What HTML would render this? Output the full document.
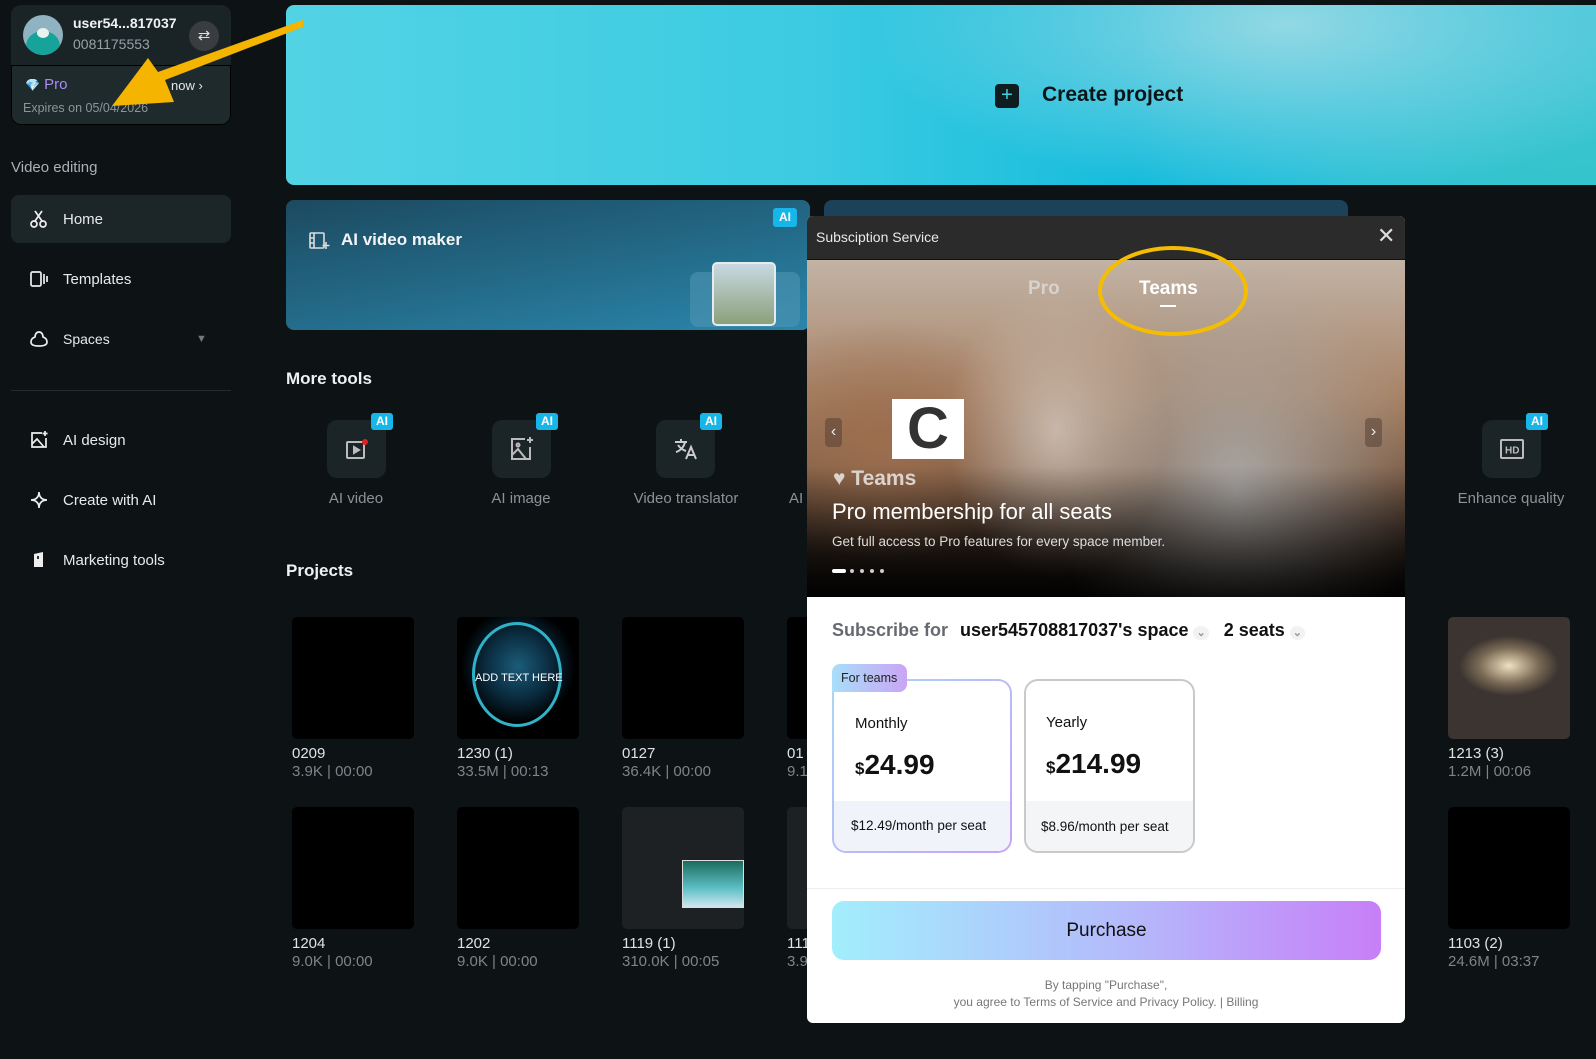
<!DOCTYPE html>
<html><head><meta charset="utf-8"><style>
*{box-sizing:border-box;margin:0;padding:0}
body{width:1596px;height:1059px;overflow:hidden;background:#0d1315;font-family:"Liberation Sans",sans-serif;color:#e8eced;position:relative}
.abs{position:absolute}
.nav{position:absolute;left:11px;width:220px;height:48px;display:flex;align-items:center;padding-left:18px;font-size:15px;color:#e6eaeb}
.nav svg{margin-right:14px}
.tile{position:absolute;width:59px;height:58px;border-radius:10px;background:#1b2427;display:flex;align-items:center;justify-content:center}
.ai{position:absolute;background:#17b6e8;color:#fff;font-size:12px;font-weight:bold;border-radius:3px;padding:2px 5px;line-height:13px}
.tl{position:absolute;font-size:15px;color:#8a9396;text-align:center;width:160px}
.th{position:absolute;width:122px;height:122px;background:#000;border-radius:5px;overflow:hidden}
.pn{position:absolute;font-size:15px;color:#dfe3e4}
.pm{position:absolute;font-size:15px;color:#7d8588}
</style></head><body>

<!-- user card -->
<div class="abs" style="left:11px;top:5px;width:220px;height:120px;border-radius:10px;background:#1a2427;overflow:hidden">
  <div class="abs" style="left:12px;top:10px;width:40px;height:40px;border-radius:50%;background:#8fb3c0;overflow:hidden">
    <div class="abs" style="left:3px;top:16px;width:34px;height:30px;border-radius:50%;background:#16a39a"></div>
    <div class="abs" style="left:14px;top:13px;width:12px;height:10px;border-radius:50%;background:#e8f3f0"></div>
  </div>
  <div class="abs" style="left:62px;top:10px;font-size:14px;font-weight:bold;color:#f0f2f3">user54...817037</div>
  <div class="abs" style="left:62px;top:31px;font-size:14px;color:#98a1a4">0081175553</div>
  <div class="abs" style="left:178px;top:16px;width:30px;height:30px;border-radius:50%;background:#3a3d3f;color:#ddd;font-size:15px;text-align:center;line-height:30px">⇄</div>
  <div class="abs" style="left:0;top:60px;width:220px;height:60px;border:1px solid #000;border-radius:0 0 10px 10px;background:#1f2a2d"></div>
  <div class="abs" style="left:14px;top:71px;font-size:15px;color:#a98cf5"><span style="font-size:12px">💎</span> Pro</div>
  <div class="abs" style="left:160px;top:73px;font-size:13px;color:#e6e6e6">now ›</div>
  <div class="abs" style="left:12px;top:96px;font-size:12.5px;color:#8c9598">Expires on 05/04/2026</div>
</div>

<div class="abs" style="left:11px;top:159px;font-size:15px;color:#a9b1b4">Video editing</div>
<div class="nav" style="top:195px;background:#1c2528;border-radius:8px">
<svg width="20" height="20" viewBox="0 0 20 20" fill="none" stroke="#eee" stroke-width="1.7"><circle cx="5" cy="15" r="3"/><circle cx="14" cy="15" r="3"/><path d="M6 12 13 2M13 12 6 2"/></svg>Home</div>
<div class="nav" style="top:255px"><svg width="20" height="20" viewBox="0 0 20 20" fill="none" stroke="#eee" stroke-width="1.7"><rect x="2" y="3" width="10" height="14" rx="1.5"/><path d="M15 5v10M18 7v6"/></svg>Templates</div>
<div class="nav" style="top:315px;font-size:14px"><svg width="20" height="20" viewBox="0 0 20 20" fill="none" stroke="#eee" stroke-width="1.7"><path d="M10 3c3 0 4 3 4 5 3 1 4 3 4 5 0 3-3 4-8 4s-8-1-8-4c0-2 1-4 4-5 0-2 1-5 4-5z"/></svg>Spaces<span style="position:absolute;left:185px;font-size:11px;color:#777">▼</span></div>
<div class="abs" style="left:11px;top:390px;width:220px;height:1px;background:#232c2f"></div>
<div class="nav" style="top:416px"><svg width="20" height="20" viewBox="0 0 20 20" fill="none" stroke="#eee" stroke-width="1.7"><path d="M13 3H3v14h14V8"/><path d="M3 14l5-5 7 8"/><path d="M16 1v5M13.5 3.5h5"/></svg>AI design</div>
<div class="nav" style="top:476px"><svg width="20" height="20" viewBox="0 0 20 20" fill="none" stroke="#eee" stroke-width="1.7"><path d="M10 2c0 5 3 8 8 8-5 0-8 3-8 8 0-5-3-8-8-8 5 0 8-3 8-8z"/></svg>Create with AI</div>
<div class="nav" style="top:536px"><svg width="20" height="20" viewBox="0 0 20 20"><path d="M5 4l9-2v15H5z" fill="#eee"/><rect x="8" y="6" width="2" height="3" fill="#333"/></svg>Marketing tools</div>

<!-- Create project banner -->
<div class="abs" style="left:286px;top:5px;width:1310px;height:180px;border-radius:8px 0 0 8px;background:radial-gradient(ellipse 420px 170px at 1000px 20px,#92d8e4,transparent),radial-gradient(ellipse 300px 160px at 1300px 200px,#34c4c9,transparent),linear-gradient(90deg,#52d3e4,#3ccbe2 40%,#16bcdc 65%,#3ec5d8)"></div>
<div class="abs" style="left:995px;top:84px;width:24px;height:24px;border-radius:4px;background:#0f1c20;color:#45d0e3;font-size:20px;text-align:center;line-height:23px">+</div>
<div class="abs" style="left:1042px;top:83px;font-size:21px;font-weight:bold;color:#0b1417">Create project</div>

<!-- AI video maker -->
<div class="abs" style="left:286px;top:200px;width:524px;height:130px;border-radius:8px;background:linear-gradient(170deg,#1c4a60,#2a86ab)"></div>
<svg class="abs" style="left:308px;top:230px" width="22" height="22" viewBox="0 0 22 22" fill="none" stroke="#ddd" stroke-width="1.6"><rect x="2" y="3" width="14" height="15" rx="1"/><path d="M6 3v15M2 8h4M2 13h4"/><path d="M18 12v7M14.5 15.5h7"/></svg>
<div class="abs" style="left:341px;top:230px;font-size:17px;font-weight:bold;color:#f2f5f6">AI video maker</div>
<div class="ai" style="left:773px;top:208px;padding:3px 6px">AI</div>
<div class="abs" style="left:690px;top:272px;width:110px;height:55px;border-radius:8px;background:#4f94b3;opacity:.6"></div>
<div class="abs" style="left:712px;top:262px;width:64px;height:64px;border-radius:5px;background:linear-gradient(#c9d9e3,#8aa07a);border:2px solid #e5ecf0"></div>
<div class="abs" style="left:824px;top:200px;width:524px;height:20px;border-radius:8px 8px 0 0;background:#1b4258"></div>

<!-- More tools -->
<div class="abs" style="left:286px;top:369px;font-size:17px;font-weight:bold;color:#eef1f2">More tools</div>
<div class="tile" style="left:327px;top:420px"><svg width="26" height="26" viewBox="0 0 26 26" fill="none" stroke="#bbb" stroke-width="2"><rect x="3" y="6" width="17" height="16" rx="1"/><path d="M10 11v6l5-3z" fill="#bbb"/><circle cx="21" cy="6" r="3" fill="#d22" stroke="none"/></svg></div>
<div class="ai" style="left:371px;top:413px">AI</div>
<div class="tl" style="left:276px;top:490px">AI video</div>
<div class="tile" style="left:492px;top:420px"><svg width="28" height="28" viewBox="0 0 28 28" fill="none" stroke="#bbb" stroke-width="2"><path d="M17 4H4v20h18V12"/><path d="M4 20l6-6 8 10"/><circle cx="10" cy="10" r="1.5"/><path d="M22 2v6M19 5h6"/></svg></div>
<div class="ai" style="left:536px;top:413px">AI</div>
<div class="tl" style="left:441px;top:490px">AI image</div>
<div class="tile" style="left:656px;top:420px"><svg width="28" height="28" viewBox="0 0 28 28" fill="none" stroke="#ccc" stroke-width="2"><path d="M3 7h12M9 4v3M13 7c-1 5-5 9-9 10M6 10c2 3 5 5 8 6"/><path d="M14 24l5-12 5 12M16 20h6"/></svg></div>
<div class="ai" style="left:700px;top:413px">AI</div>
<div class="tl" style="left:606px;top:490px">Video translator</div>
<div class="abs" style="left:789px;top:490px;font-size:15px;color:#8a9396">AI</div>
<div class="tile" style="left:1482px;top:420px"><svg width="26" height="22" viewBox="0 0 26 22" fill="none" stroke="#bbb" stroke-width="2"><rect x="2" y="2" width="22" height="18" rx="1"/><text x="6" y="15.5" font-size="10" font-family="Liberation Sans" font-weight="bold" fill="#bbb" stroke="none">HD</text></svg></div>
<div class="ai" style="left:1526px;top:413px">AI</div>
<div class="tl" style="left:1431px;top:490px">Enhance quality</div>

<!-- Projects -->
<div class="abs" style="left:286px;top:561px;font-size:17px;font-weight:bold;color:#eef1f2">Projects</div>
<div class="th" style="left:292px;top:617px"></div>
<div class="th" style="left:457px;top:617px;background:radial-gradient(circle at 50% 40%,#1b5c7a 0,#0a2a3d 35%,#000 60%)"><div class="abs" style="left:15px;top:5px;width:90px;height:105px;border:3px solid #2fb3c9;border-radius:50%"></div><div class="abs" style="left:18px;top:55px;font-size:11px;color:#fff">ADD TEXT HERE</div></div>
<div class="th" style="left:622px;top:617px"></div>
<div class="th" style="left:787px;top:617px"></div>
<div class="th" style="left:1448px;top:617px;background:radial-gradient(ellipse 50px 30px at 50% 40%,#eee0c0,#7a6a55 60%,#3b3430)"></div>
<div class="pn" style="left:292px;top:745px">0209</div><div class="pm" style="left:292px;top:763px">3.9K | 00:00</div>
<div class="pn" style="left:457px;top:745px">1230 (1)</div><div class="pm" style="left:457px;top:763px">33.5M | 00:13</div>
<div class="pn" style="left:622px;top:745px">0127</div><div class="pm" style="left:622px;top:763px">36.4K | 00:00</div>
<div class="pn" style="left:787px;top:745px">01</div><div class="pm" style="left:787px;top:763px">9.1</div>
<div class="pn" style="left:1448px;top:745px">1213 (3)</div><div class="pm" style="left:1448px;top:763px">1.2M | 00:06</div>
<div class="th" style="left:292px;top:807px"></div>
<div class="th" style="left:457px;top:807px"></div>
<div class="th" style="left:622px;top:807px;background:#1e2124"><div class="abs" style="left:60px;top:53px;width:62px;height:48px;border:1px solid #ddd;background:linear-gradient(#1a6c5c,#5fc0c8 60%,#cfe6ee)"></div></div>
<div class="th" style="left:787px;top:807px;background:#1e2124"></div>
<div class="th" style="left:1448px;top:807px"></div>
<div class="pn" style="left:292px;top:935px">1204</div><div class="pm" style="left:292px;top:953px">9.0K | 00:00</div>
<div class="pn" style="left:457px;top:935px">1202</div><div class="pm" style="left:457px;top:953px">9.0K | 00:00</div>
<div class="pn" style="left:622px;top:935px">1119 (1)</div><div class="pm" style="left:622px;top:953px">310.0K | 00:05</div>
<div class="pn" style="left:787px;top:935px">111</div><div class="pm" style="left:787px;top:953px">3.9</div>
<div class="pn" style="left:1448px;top:935px">1103 (2)</div><div class="pm" style="left:1448px;top:953px">24.6M | 03:37</div>

<!-- Modal -->
<div class="abs" style="left:807px;top:216px;width:598px;height:807px;border-radius:6px;overflow:hidden;background:#fff">
  <div class="abs" style="left:0;top:0;width:598px;height:44px;background:#2b2b2b;border-bottom:1px solid #111"></div>
  <div class="abs" style="left:9px;top:13px;font-size:14px;color:#e8e8e8">Subsciption Service</div>
  <div class="abs" style="left:570px;top:7px;font-size:22px;color:#ddd">✕</div>
  <div class="abs" style="left:0;top:44px;width:598px;height:337px;background:radial-gradient(ellipse 110px 150px at 250px 170px,#c7b7aa,transparent),radial-gradient(ellipse 180px 230px at 430px 230px,#aaa7a4,transparent),radial-gradient(ellipse 160px 120px at 80px 180px,#9c6e4e,transparent),linear-gradient(180deg,#c2b3a5 0%,#a88468 40%,#7a5a44 65%,#0e0c0b 100%)"></div>
  <div class="abs" style="left:0;top:250px;width:598px;height:131px;background:linear-gradient(transparent,rgba(0,0,0,.85))"></div>
  <div class="abs" style="left:221px;top:62px;font-size:19px;font-weight:bold;color:#d8d2cc">Pro</div>
  <div class="abs" style="left:332px;top:62px;font-size:19px;font-weight:bold;color:#fff">Teams</div>
  <div class="abs" style="left:353px;top:89px;width:16px;height:2px;background:#fff"></div>
  <div class="abs" style="left:85px;top:183px;width:72px;height:60px;background:#fff;color:#333;font-size:58px;font-weight:bold;text-align:center;line-height:60px">C</div>
  <div class="abs" style="left:18px;top:202px;width:17px;height:29px;border-radius:4px;background:rgba(80,60,50,.5);color:#eee;text-align:center;line-height:28px">‹</div>
  <div class="abs" style="left:558px;top:202px;width:17px;height:29px;border-radius:4px;background:rgba(80,60,50,.5);color:#eee;text-align:center;line-height:28px">›</div>
  <div class="abs" style="left:26px;top:251px;font-size:21px;font-weight:bold;color:#dcd3cc">♥ Teams</div>
  <div class="abs" style="left:25px;top:283px;font-size:22px;color:#fff">Pro membership for all seats</div>
  <div class="abs" style="left:25px;top:318px;font-size:13.5px;color:#ddd">Get full access to Pro features for every space member.</div>
  <div class="abs" style="left:25px;top:353px;width:14px;height:4px;border-radius:2px;background:#fff"></div>
  <div class="abs" style="left:43px;top:353px;font-size:0"><span style="display:inline-block;width:4px;height:4px;border-radius:50%;background:#ccc;margin-right:6px"></span><span style="display:inline-block;width:4px;height:4px;border-radius:50%;background:#ccc;margin-right:6px"></span><span style="display:inline-block;width:4px;height:4px;border-radius:50%;background:#ccc;margin-right:6px"></span><span style="display:inline-block;width:4px;height:4px;border-radius:50%;background:#ccc"></span></div>

  <div class="abs" style="left:25px;top:404px;font-size:18px;font-weight:bold;color:#666a70">Subscribe for</div>
  <div class="abs" style="left:153px;top:404px;font-size:18px;font-weight:bold;color:#111">user545708817037's space <span style="font-size:11px;color:#999;background:#f2f2f2;border-radius:50%;padding:1px 3px">⌄</span>&nbsp;&nbsp;&nbsp;2 seats <span style="font-size:11px;color:#999;background:#f2f2f2;border-radius:50%;padding:1px 3px">⌄</span></div>

  <div class="abs" style="left:25px;top:463px;width:180px;height:174px;border-radius:14px;padding:2px;background:linear-gradient(135deg,#a6d8f7,#c8a2f5)"><div style="width:100%;height:100%;border-radius:12px;background:#fff;overflow:hidden;position:relative"><div class="abs" style="left:0;top:120px;width:100%;height:60px;background:#f1f3fb"></div></div></div>
  <div class="abs" style="left:25px;top:448px;width:75px;height:28px;border-radius:8px 8px 8px 0;background:linear-gradient(90deg,#a8def8,#caa5f5);font-size:12.5px;color:#222;padding:7px 0 0 9px">For teams</div>
  <div class="abs" style="left:48px;top:499px;font-size:15px;color:#111">Monthly</div>
  <div class="abs" style="left:48px;top:533px;font-size:28px;font-weight:bold;color:#111"><span style="font-size:17px">$</span>24.99</div>
  <div class="abs" style="left:44px;top:602px;font-size:13.5px;color:#111">$12.49/month per seat</div>

  <div class="abs" style="left:217px;top:463px;width:171px;height:174px;border-radius:14px;border:2px solid #c9c9c9;background:#fff;overflow:hidden"><div class="abs" style="left:0;top:120px;width:100%;height:60px;background:#f4f5f6"></div></div>
  <div class="abs" style="left:239px;top:498px;font-size:15px;color:#111">Yearly</div>
  <div class="abs" style="left:239px;top:532px;font-size:28px;font-weight:bold;color:#111"><span style="font-size:17px">$</span>214.99</div>
  <div class="abs" style="left:234px;top:603px;font-size:13.5px;color:#111">$8.96/month per seat</div>

  <div class="abs" style="left:0;top:672px;width:598px;height:1px;background:#eee"></div>
  <div class="abs" style="left:25px;top:685px;width:549px;height:59px;border-radius:12px;background:linear-gradient(90deg,#a2eefc,#b5b8fb 55%,#c77ff8);font-size:19px;color:#111;text-align:center;line-height:59px">Purchase</div>
  <div class="abs" style="left:0;top:761px;width:598px;text-align:center;font-size:12px;color:#777;line-height:17px">By tapping "Purchase",<br>you agree to Terms of Service and Privacy Policy. | Billing</div>
</div>

<!-- annotations -->
<svg class="abs" style="left:0;top:0" width="1596" height="1059">
  <ellipse cx="1173" cy="291" rx="73" ry="43" fill="none" stroke="#f5bd02" stroke-width="4"/>
  <polygon points="303,20 303,27 165,80 174,102 112,106 148,58 158,72" fill="#f5b400"/>
</svg>
</body></html>
